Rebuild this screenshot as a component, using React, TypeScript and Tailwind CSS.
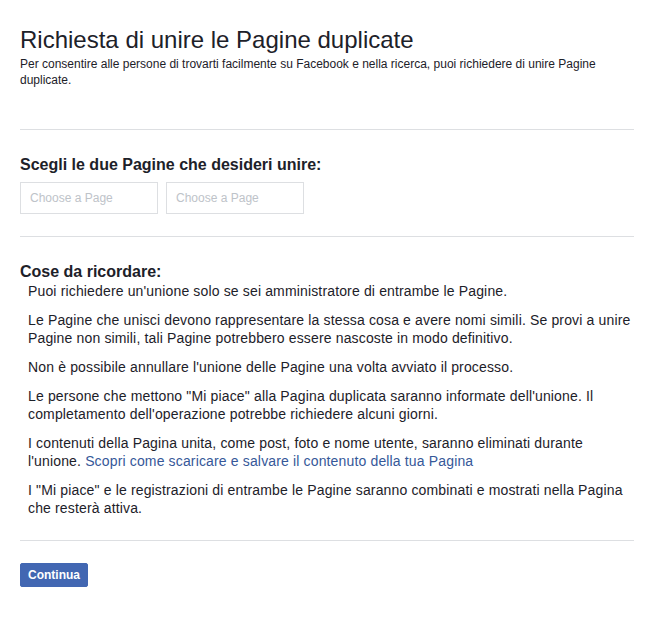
import React from "react";

export default function App() {
  const font = { fontFamily: '"Liberation Sans", Arial, Helvetica, sans-serif' };
  return (
    <div className="w-[668px] h-[625px] bg-white text-[#1d2129]" style={font}>
      <div className="ml-5 w-[614px] pt-[26px]">
        <h1 className="text-[24px] leading-[28px] font-normal text-[#1d2129]">
          Richiesta di unire le Pagine duplicate
        </h1>
        <p className="text-[12px] leading-[16px] mt-[2px] text-[#1d2129]">
          Per consentire alle persone di trovarti facilmente su Facebook e nella ricerca, puoi richiedere di unire Pagine duplicate.
        </p>
        <div className="mt-[41px] border-t border-[#dddfe2]" />
        <h2 className="mt-[25px] text-[16px] leading-[20px] font-bold">Scegli le due Pagine che desideri unire:</h2>
        <div className="flex gap-[8px] mt-[7px]">
          <div className="w-[138px] h-[32px] border border-[#dddfe2] flex items-center px-[9px] text-[12px] text-[#bec3c9]">
            Choose a Page
          </div>
          <div className="w-[138px] h-[32px] border border-[#dddfe2] flex items-center px-[9px] text-[12px] text-[#bec3c9]">
            Choose a Page
          </div>
        </div>
        <div className="mt-[22px] border-t border-[#dddfe2]" />
        <h2 className="mt-[25px] text-[16px] leading-[20px] font-bold">Cose da ricordare:</h2>
        <div className="pl-[8px] text-[14px] leading-[18px] tracking-[0.15px] flex flex-col gap-[11px]">
          <p>Puoi richiedere un'unione solo se sei amministratore di entrambe le Pagine.</p>
          <p>
            Le Pagine che unisci devono rappresentare la stessa cosa e avere nomi simili. Se provi a unire Pagine non simili, tali Pagine potrebbero essere nascoste in modo definitivo.
          </p>
          <p>Non è possibile annullare l'unione delle Pagine una volta avviato il processo.</p>
          <p>
            Le persone che mettono "Mi piace" alla Pagina duplicata saranno informate dell'unione. Il completamento dell'operazione potrebbe richiedere alcuni giorni.
          </p>
          <p>
            I contenuti della Pagina unita, come post, foto e nome utente, saranno eliminati durante l'unione.{" "}
            <a className="text-[#365899]">Scopri come scaricare e salvare il contenuto della tua Pagina</a>
          </p>
          <p>
            I "Mi piace" e le registrazioni di entrambe le Pagine saranno combinati e mostrati nella Pagina che resterà attiva.
          </p>
        </div>
        <div className="mt-[23px] border-t border-[#dddfe2]" />
        <button className="mt-[22px] h-[24px] px-[7px] bg-[#4267b2] border border-[#4267b2] rounded-[2px] text-white text-[12px] font-bold leading-[22px]">
          Continua
        </button>
      </div>
    </div>
  );
}
